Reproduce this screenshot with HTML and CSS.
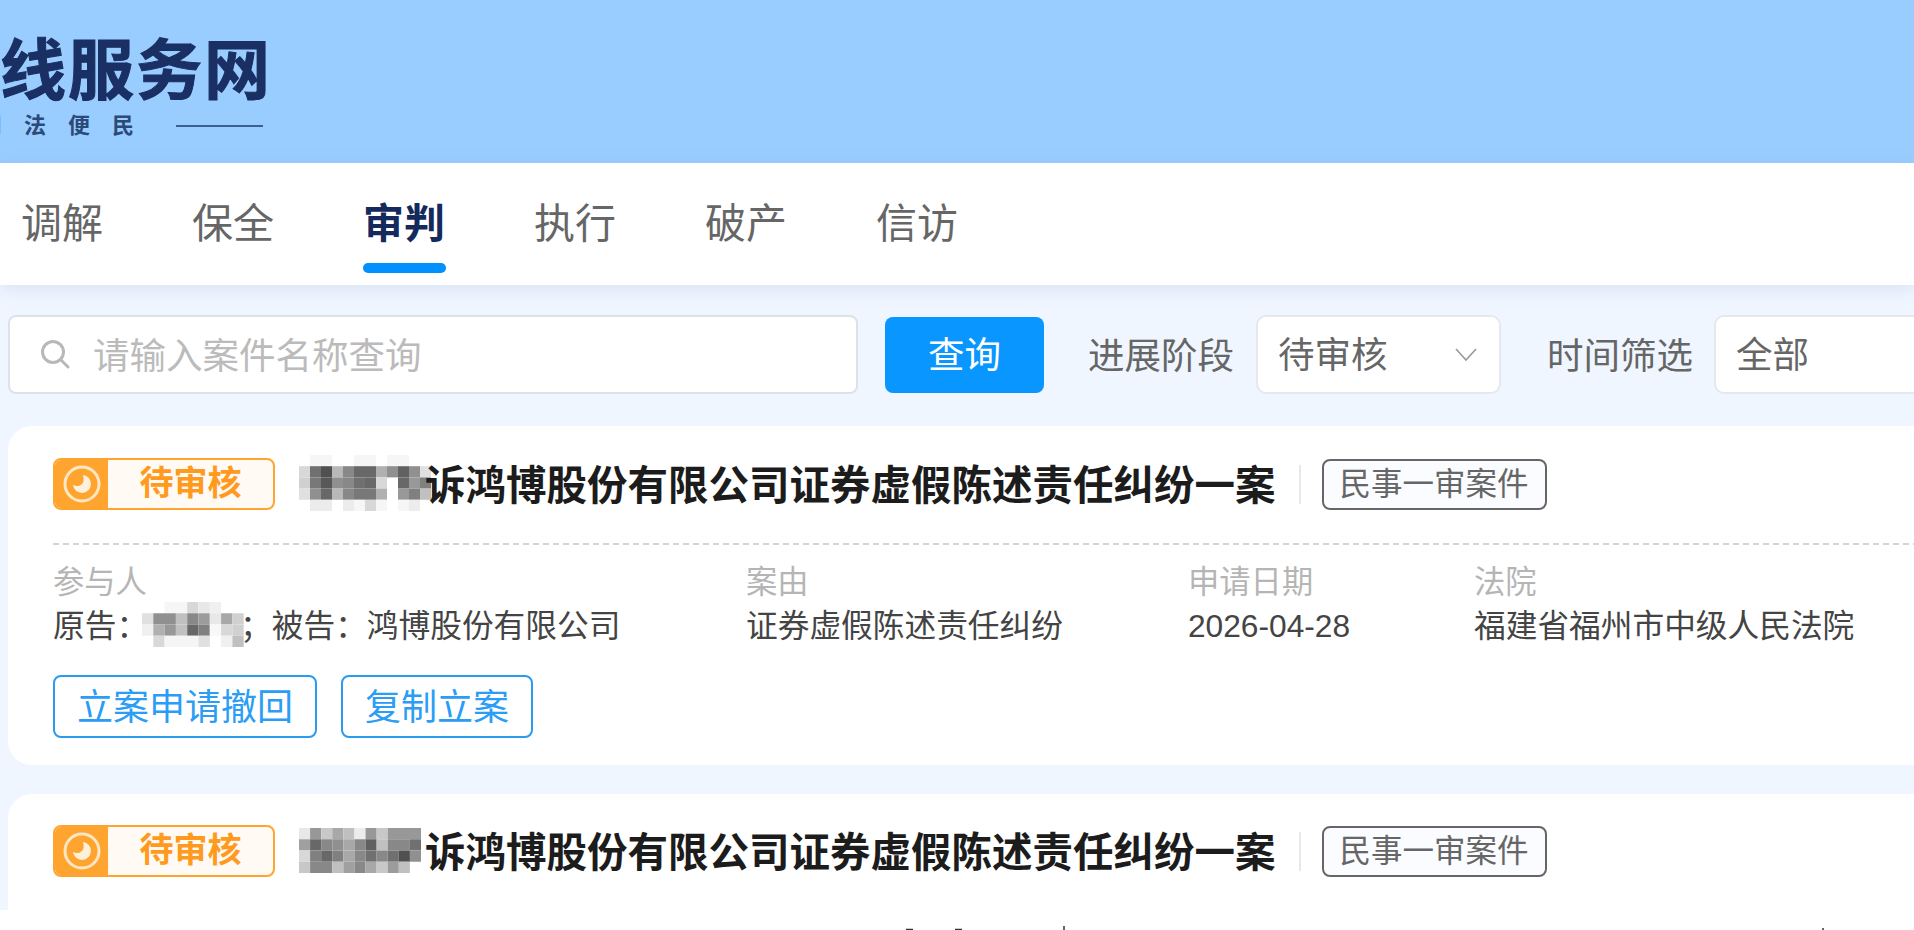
FILE: index.html
```html
<!DOCTYPE html>
<html lang="en">
<head>
    <meta charset="UTF-8">
    <title>在线服务网</title>

    <link rel="stylesheet" href="styles.css">
</head>
<body>
    <header class="siteHeader">
        <div class="logoName">线服务网</div>
        <div class="logoSlogan">
            <span class="sloganText">司法便民</span>
            <span class="sloganLine"></span>
        </div>
    </header>

    <nav class="topNav">
        <a class="navItem">调解</a>
        <a class="navItem">保全</a>
        <a class="navItem active">审判</a>
        <a class="navItem">执行</a>
        <a class="navItem">破产</a>
        <a class="navItem">信访</a>
    </nav>

    <main class="content">
        <form class="toolbar">
            <div class="searchBox">
                <svg class="searchIcon" viewBox="0 0 30 30" fill="none" stroke="#b8b8b8" stroke-width="3" stroke-linecap="round">
                    <circle cx="13" cy="13" r="10.5"/>
                    <path d="M21 21l7 7"/>
                </svg>
                <span class="placeholder">请输入案件名称查询</span>
            </div>
            <button class="searchBtn" type="button">查询</button>
            <label class="filterLabel stage">进展阶段</label>
            <div class="selectBox stageSelect">
                <span>待审核</span>
                <svg class="chevron" viewBox="0 0 22 13" fill="none" stroke="#999" stroke-width="1.6">
                    <path d="M1 1l10 11L21 1"/>
                </svg>
            </div>
            <label class="filterLabel time">时间筛选</label>
            <div class="selectBox timeSelect">
                <span>全部</span>
            </div>
        </form>

        <article class="caseCard">
            <div class="cardHead">
                <div class="statusTag">
                    <span class="statusIcon">
                        <svg viewBox="0 0 40 40">
                            <circle cx="20" cy="20" r="17" fill="none" stroke="#ffe6c4" stroke-width="3"/>
                            <path d="M21 11a9 9 0 1 1-10 10c4 2 7 1 9-1s2-5 1-9z" fill="#fff0da"/>
                        </svg>
                    </span>
                    <span class="statusText">待审核</span>
                </div>
                <h3 class="caseTitle">
                    <span class="maskTitle">
                        <svg viewBox="0 0 12 5" preserveAspectRatio="none">
                            <path fill="#f6f6f6" d="M1 0h1v1H1zM2 0h1v1H2zM5 0h1v1H5zM6 0h1v1H6zM8 0h2v1H8z"/>
                            <path fill="#d8d8d8" d="M0 1h1v1H0z"/><path fill="#707070" d="M1 1h1v1H1z"/><path fill="#505050" d="M2 1h1v1H2z"/><path fill="#b8b8b8" d="M3 1h1v1H3z"/><path fill="#888888" d="M4 1h1v1H4z"/><path fill="#686868" d="M5 1h2v1H5z"/><path fill="#b0b0b0" d="M7 1h1v1H7z"/><path fill="#909090" d="M8 1h1v1H8z"/><path fill="#626262" d="M9 1h1v1H9z"/><path fill="#909090" d="M10 1h1v1H10z"/><path fill="#e0e0e0" d="M11 1h1v1H11z"/>
                            <path fill="#d0d0d0" d="M0 2h1v1H0z"/><path fill="#787878" d="M1 2h1v1H1z"/><path fill="#585858" d="M2 2h1v1H2z"/><path fill="#909090" d="M3 2h1v1H3z"/><path fill="#888888" d="M4 2h1v1H4z"/><path fill="#707070" d="M5 2h1v1H5z"/><path fill="#686868" d="M6 2h1v1H6z"/><path fill="#d8d8d8" d="M7 2h1v1H7z"/><path fill="#686868" d="M9 2h1v1H9z"/><path fill="#989898" d="M10 2h1v1H10z"/><path fill="#808080" d="M11 2h1v1H11z"/>
                            <path fill="#e0e0e0" d="M0 3h1v1H0z"/><path fill="#909090" d="M1 3h1v1H1z"/><path fill="#686868" d="M2 3h1v1H2z"/><path fill="#b8b8b8" d="M3 3h1v1H3z"/><path fill="#888888" d="M4 3h1v1H4z"/><path fill="#787878" d="M5 3h2v1H5z"/><path fill="#b0b0b0" d="M7 3h1v1H7z"/><path fill="#989898" d="M9 3h1v1H9z"/><path fill="#808080" d="M10 3h1v1H10z"/><path fill="#c0c0c0" d="M11 3h1v1H11z"/>
                            <path fill="#ececec" d="M1 4h2v1H1zM4 4h1v1H4zM10 4h1v1H10z"/><path fill="#d8d8d8" d="M6 4h1v1H6z"/><path fill="#f6f6f6" d="M5 4h1v1H5zM7 4h1v1H7zM9 4h1v1H9z"/>
                        </svg>
                    </span><span class="titleText">诉鸿博股份有限公司证券虚假陈述责任纠纷一案</span>
                </h3>
                <span class="headSep"></span>
                <span class="caseType">民事一审案件</span>
            </div>
            <div class="caseInfo">
                <div class="infoCol">
                    <div class="infoLabel">参与人</div>
                    <div class="infoValue">原告：<span class="maskParty">
                        <svg viewBox="0 0 10 4" preserveAspectRatio="none">
                            <path fill="#f6f6f6" d="M2 0h2v1H2z"/><path fill="#d8d8d8" d="M4 0h1v1H4z"/><path fill="#e8e8e8" d="M5 0h1v1H5z"/><path fill="#f0f0f0" d="M6 0h1v1H6z"/>
                            <path fill="#e0e0e0" d="M0 1h1v1H0z"/><path fill="#909090" d="M1 1h2v1H1z"/><path fill="#c0c0c0" d="M3 1h1v1H3z"/><path fill="#888888" d="M4 1h1v1H4z"/><path fill="#9c9c9c" d="M5 1h1v1H5z"/><path fill="#e8e8e8" d="M6 1h1v1H6z"/><path fill="#a8a8a8" d="M7 1h1v1H7z"/><path fill="#d0d0d0" d="M8 1h1v1H8z"/>
                            <path fill="#f0f0f0" d="M0 2h1v1H0z"/><path fill="#b0b0b0" d="M1 2h1v1H1z"/><path fill="#989898" d="M2 2h1v1H2z"/><path fill="#c0c0c0" d="M3 2h1v1H3z"/><path fill="#686868" d="M4 2h1v1H4z"/><path fill="#808080" d="M5 2h1v1H5z"/><path fill="#f8f8f8" d="M6 2h1v1H6z"/><path fill="#d8d8d8" d="M7 2h1v1H7z"/><path fill="#d0d0d0" d="M8 2h1v1H8z"/>
                            <path fill="#d8d8d8" d="M1 3h1v1H1z"/><path fill="#f5f5f5" d="M2 3h3v1H2z"/><path fill="#e0e0e0" d="M5 3h1v1H5z"/><path fill="#f0f0f0" d="M7 3h1v1H7z"/><path fill="#c0c0c0" d="M8 3h1v1H8z"/>
                        </svg>
                    </span>；被告：鸿博股份有限公司</div>
                </div>
                <div class="infoCol">
                    <div class="infoLabel">案由</div>
                    <div class="infoValue">证券虚假陈述责任纠纷</div>
                </div>
                <div class="infoCol">
                    <div class="infoLabel">申请日期</div>
                    <div class="infoValue">2026-04-28</div>
                </div>
                <div class="infoCol">
                    <div class="infoLabel">法院</div>
                    <div class="infoValue">福建省福州市中级人民法院</div>
                </div>
            </div>
            <div class="cardActions">
                <button class="outlineBtn withdraw" type="button">立案申请撤回</button>
                <button class="outlineBtn copy" type="button">复制立案</button>
            </div>
        </article>

        <article class="caseCard">
            <div class="cardHead">
                <div class="statusTag">
                    <span class="statusIcon">
                        <svg viewBox="0 0 40 40">
                            <circle cx="20" cy="20" r="17" fill="none" stroke="#ffe6c4" stroke-width="3"/>
                            <path d="M21 11a9 9 0 1 1-10 10c4 2 7 1 9-1s2-5 1-9z" fill="#fff0da"/>
                        </svg>
                    </span>
                    <span class="statusText">待审核</span>
                </div>
                <h3 class="caseTitle">
                    <span class="maskTitle second">
                        <svg viewBox="0 0 11 4" preserveAspectRatio="none">
                            <path fill="#e8e8e8" d="M0 0h1v1H0z"/><path fill="#989898" d="M1 0h1v1H1z"/><path fill="#c8c8c8" d="M2 0h1v1H2z"/><path fill="#a8a8a8" d="M3 0h1v1H3z"/><path fill="#c0c0c0" d="M4 0h1v1H4z"/><path fill="#ececec" d="M5 0h1v1H5z"/><path fill="#989898" d="M6 0h1v1H6z"/><path fill="#c8c8c8" d="M7 0h1v1H7z"/><path fill="#989898" d="M8 0h3v1H8z"/>
                            <path fill="#a0a0a0" d="M0 1h1v1H0z"/><path fill="#686868" d="M1 1h1v1H1z"/><path fill="#888888" d="M2 1h1v1H2z"/><path fill="#909090" d="M3 1h1v1H3z"/><path fill="#a8a8a8" d="M4 1h1v1H4z"/><path fill="#888888" d="M5 1h1v1H5z"/><path fill="#606060" d="M6 1h1v1H6z"/><path fill="#c0c0c0" d="M7 1h1v1H7z"/><path fill="#888888" d="M8 1h2v1H8z"/><path fill="#707070" d="M10 1h1v1H10z"/>
                            <path fill="#d8d8d8" d="M0 2h1v1H0z"/><path fill="#808080" d="M1 2h1v1H1z"/><path fill="#686868" d="M2 2h1v1H2z"/><path fill="#808080" d="M3 2h1v1H3z"/><path fill="#a8a8a8" d="M4 2h1v1H4z"/><path fill="#888888" d="M5 2h1v1H5z"/><path fill="#707070" d="M6 2h1v1H6z"/><path fill="#888888" d="M7 2h1v1H7z"/><path fill="#707070" d="M8 2h1v1H8z"/><path fill="#505050" d="M9 2h1v1H9z"/><path fill="#909090" d="M10 2h1v1H10z"/>
                            <path fill="#c8c8c8" d="M0 3h1v1H0z"/><path fill="#888888" d="M1 3h2v1H1z"/><path fill="#c0c0c0" d="M3 3h1v1H3z"/><path fill="#a0a0a0" d="M4 3h1v1H4z"/><path fill="#888888" d="M5 3h1v1H5z"/><path fill="#a8a8a8" d="M6 3h1v1H6z"/><path fill="#c8c8c8" d="M7 3h1v1H7z"/><path fill="#9c9c9c" d="M8 3h1v1H8z"/><path fill="#c0c0c0" d="M9 3h1v1H9z"/>
                        </svg>
                    </span><span class="titleText">诉鸿博股份有限公司证券虚假陈述责任纠纷一案</span>
                </h3>
                <span class="headSep"></span>
                <span class="caseType">民事一审案件</span>
            </div>
        </article>
    </main>

    <div class="bottomStrip">
        <svg viewBox="0 0 1914 20" fill="none" stroke="#333" stroke-width="1.5">
            <path d="M906 19.5h7M955 19.5h7M1064 16v4M1823 18v2"/>
        </svg>
    </div>
</body>
</html>
```

FILE: styles.css
```css
* {
    box-sizing: border-box;
}

body {
    font-family: "Liberation Sans", "Noto Sans CJK SC", sans-serif;
    margin: 0;
    height: 930px;
    overflow: hidden;
    display: flex;
    flex-direction: column;
    background: #fff;
}

/* header */
.siteHeader {
    height: 163px;
    padding-top: 38px;
    background: #99ccff;
    color: #1a2f63;
    overflow: hidden;
}

.logoName {
    font-size: 66px;
    line-height: 66px;
    font-weight: 700;
    letter-spacing: 2px;
    -webkit-text-stroke: 1px #1a2f63;
}

.logoSlogan {
    display: flex;
    align-items: center;
    margin-top: 9px;
    margin-left: -20px;
    height: 26px;
}

.sloganText {
    font-size: 22px;
    font-weight: 700;
    line-height: 26px;
    letter-spacing: 22px;
    color: #2c4a78;
}

.sloganLine {
    width: 87px;
    height: 2px;
    margin-left: 20px;
    background: #3c5f91;
}

/* nav */
.topNav {
    height: 122px;
    display: flex;
    gap: 91px;
    padding-left: 21px;
    background: #fff;
    box-shadow: 0 4px 16px rgba(120, 150, 200, 0.2);
    position: relative;
    z-index: 1;
}

.navItem {
    position: relative;
    width: 80px;
    font-size: 41px;
    line-height: 122px;
    white-space: nowrap;
    color: #666;
}

.navItem.active {
    color: #142a5c;
    font-weight: 700;
}

.navItem.active::after {
    content: "";
    position: absolute;
    left: 0;
    right: -3px;
    top: 100px;
    height: 10px;
    border-radius: 5px;
    background: #0090ff;
}

/* search bar */
.content {
    height: 625px;
    padding: 30px 0 0 8px;
    background: #f0f6ff;
    overflow: hidden;
}

.toolbar {
    display: flex;
    align-items: center;
    height: 79px;
    margin-right: -100px;
    font-size: 36.5px;
    color: #666;
}

.searchBox {
    width: 850px;
    height: 79px;
    display: flex;
    align-items: center;
    padding: 0 0 2px 30px;
    background: #fff;
    border: 2px solid #dde2ea;
    border-radius: 8px;
}

.searchIcon {
    width: 30px;
    height: 30px;
    margin-right: 23px;
}

.placeholder {
    color: #bbb;
}

.searchBtn {
    width: 159px;
    height: 76px;
    margin-left: 27px;
    padding: 0 0 4px;
    border: none;
    border-radius: 8px;
    background: #0a96ff;
    color: #fff;
    font-family: inherit;
    font-size: 36.5px;
}

.filterLabel {
    flex: none;
    padding-bottom: 2px;
}

.filterLabel.stage {
    margin: 0 22px 0 44px;
}

.filterLabel.time {
    margin: 0 21px 0 46px;
}

.selectBox {
    flex: none;
    height: 79px;
    display: flex;
    align-items: center;
    justify-content: space-between;
    padding: 0 22px 4px 20px;
    background: #fff;
    border: 2px solid #e6e8ec;
    border-radius: 10px;
}

.stageSelect {
    width: 245px;
}

.timeSelect {
    width: 300px;
}

.chevron {
    width: 22px;
    height: 13px;
    margin-top: 4px;
}

/* cards */
.caseCard {
    margin: 32px -100px 0 0;
    padding: 32px 45px 27px;
    background: #fff;
    border-radius: 24px;
}

.caseCard + .caseCard {
    margin-top: 29px;
    padding-top: 31px;
}

.cardHead {
    display: flex;
    align-items: center;
    padding-bottom: 33px;
    border-bottom: 2px dashed #d4d4d4;
}

.statusTag {
    width: 222px;
    height: 52px;
    display: flex;
    background: #fffaf3;
    border: 2px solid #ffa52f;
    border-radius: 8px;
    overflow: hidden;
}

.statusIcon {
    width: 53px;
    display: flex;
    align-items: center;
    justify-content: center;
    background: #ffa52f;
}

.statusIcon svg {
    width: 40px;
    height: 40px;
}

.statusText {
    flex: 1;
    text-align: center;
    font-size: 34px;
    font-weight: 700;
    line-height: 46px;
    color: #ff9a1f;
}

.caseTitle {
    display: flex;
    margin: 0 0 0 24px;
    font-size: 40.5px;
    line-height: 52px;
    font-weight: 700;
    color: #1c1c1c;
}

.titleText {
    position: relative;
    top: 2px;
}

.maskTitle {
    position: relative;
    width: 126px;
}

.maskTitle svg {
    position: absolute;
    left: 0;
    top: -3px;
    width: 132px;
    height: 56px;
    filter: blur(0.6px);
}

.maskTitle.second svg {
    width: 122px;
    height: 45px;
    top: 3px;
}

.headSep {
    width: 2px;
    height: 39px;
    margin: 0 21px 0 23px;
    background: #e8e8e8;
}

.caseType {
    width: 225px;
    height: 51px;
    text-align: center;
    font-size: 31.5px;
    line-height: 47px;
    color: #666;
    background: #fafcff;
    border: 2px solid #666;
    border-radius: 8px;
}

.caseInfo {
    display: grid;
    grid-template-columns: 693px 442px 286px 1fr;
    margin-top: 16px;
    font-size: 31.3px;
    line-height: 43px;
}

.infoLabel {
    color: #b5b5b5;
}

.infoValue {
    position: relative;
    top: 1px;
    font-size: 31.7px;
    color: #444;
    white-space: nowrap;
}

.maskParty {
    position: relative;
    display: inline-block;
    width: 92px;
}

.maskParty svg {
    position: absolute;
    left: -6px;
    top: -35px;
    width: 113px;
    height: 45px;
    filter: blur(0.6px);
}

.cardActions {
    display: flex;
    gap: 24px;
    margin-top: 28px;
}

.outlineBtn {
    height: 63px;
    padding: 0 0 5px;
    background: #fff;
    border: 2px solid #2a9cf0;
    border-radius: 8px;
    color: #2b9df5;
    font-family: inherit;
    font-size: 36px;
}

.outlineBtn.withdraw {
    width: 264px;
}

.outlineBtn.copy {
    width: 192px;
}

.bottomStrip {
    height: 20px;
    background: #fff;
}

.bottomStrip svg {
    display: block;
    width: 1914px;
    height: 20px;
}
```
